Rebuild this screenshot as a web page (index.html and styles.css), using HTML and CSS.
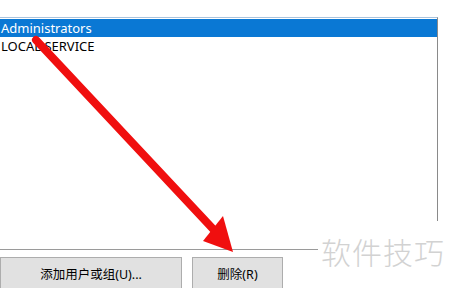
FILE: index.html
```html
<!DOCTYPE html>
<html lang="zh-CN">
<head>
    <meta charset="UTF-8">
    <title>组或用户名</title>
    <link rel="stylesheet" href="styles.css">
</head>
<body>
    <div class="dialog">
        <div class="user-list">
            <div class="user-item selected">Administrators</div>
            <div class="user-item">LOCAL SERVICE</div>
        </div>
        <div class="actions">
            <button class="btn btn-add">添加用户或组(U)...</button>
            <button class="btn btn-remove">删除(R)</button>
        </div>
    </div>

    <div class="watermark">软件技巧</div>

    <svg class="arrow" width="450" height="288" viewBox="0 0 450 288">
        <line x1="36" y1="40" x2="214" y2="230" stroke="#f00f0f" stroke-width="8" stroke-linecap="round"/>
        <polygon points="223,216 203,241 233,252" fill="#f00f0f"/>
    </svg>
</body>
</html>
```

FILE: styles.css
```css
* {
    margin: 0;
    padding: 0;
    box-sizing: border-box;
}
body {
    width: 450px;
    height: 288px;
    overflow: hidden;
    position: relative;
    background: #fff;
    font-family: "Noto Sans", "Noto Sans CJK SC", sans-serif;
    font-size: 13px;
    color: #000;
}
.dialog {
    padding-top: 17px;
}
.user-list {
    width: 438px;
    height: 233px;
    border-top: 1px solid #a9c3dd;
    border-right: 1px solid #8a8a8a;
    border-bottom: 1px solid #9a9a9a;
    padding-top: 1px;
}
.user-item {
    height: 18px;
    line-height: 18px;
    padding-left: 1px;
}
.user-item.selected {
    background: #0a78d4;
    color: #fff;
}
.actions {
    display: flex;
    gap: 10px;
    margin-top: 7px;
}
.btn {
    height: 32px;
    background: #e1e1e1;
    border: 1px solid #adadad;
    font-family: "Noto Sans", "Noto Sans CJK SC", sans-serif;
    font-size: 12.5px;
    color: #000;
}
.btn-add {
    width: 182px;
}
.btn-remove {
    width: 91px;
}
.watermark {
    position: absolute;
    left: 318px;
    top: 221px;
    width: 132px;
    height: 67px;
    background: #fff;
    padding-left: 3px;
    padding-top: 12px;
    font-family: "Noto Sans CJK SC", sans-serif;
    font-size: 30px;
    font-weight: 300;
    line-height: 36px;
    letter-spacing: 1px;
    color: #d2d2d2;
}
.arrow {
    position: absolute;
    left: 0;
    top: 0;
}
```
